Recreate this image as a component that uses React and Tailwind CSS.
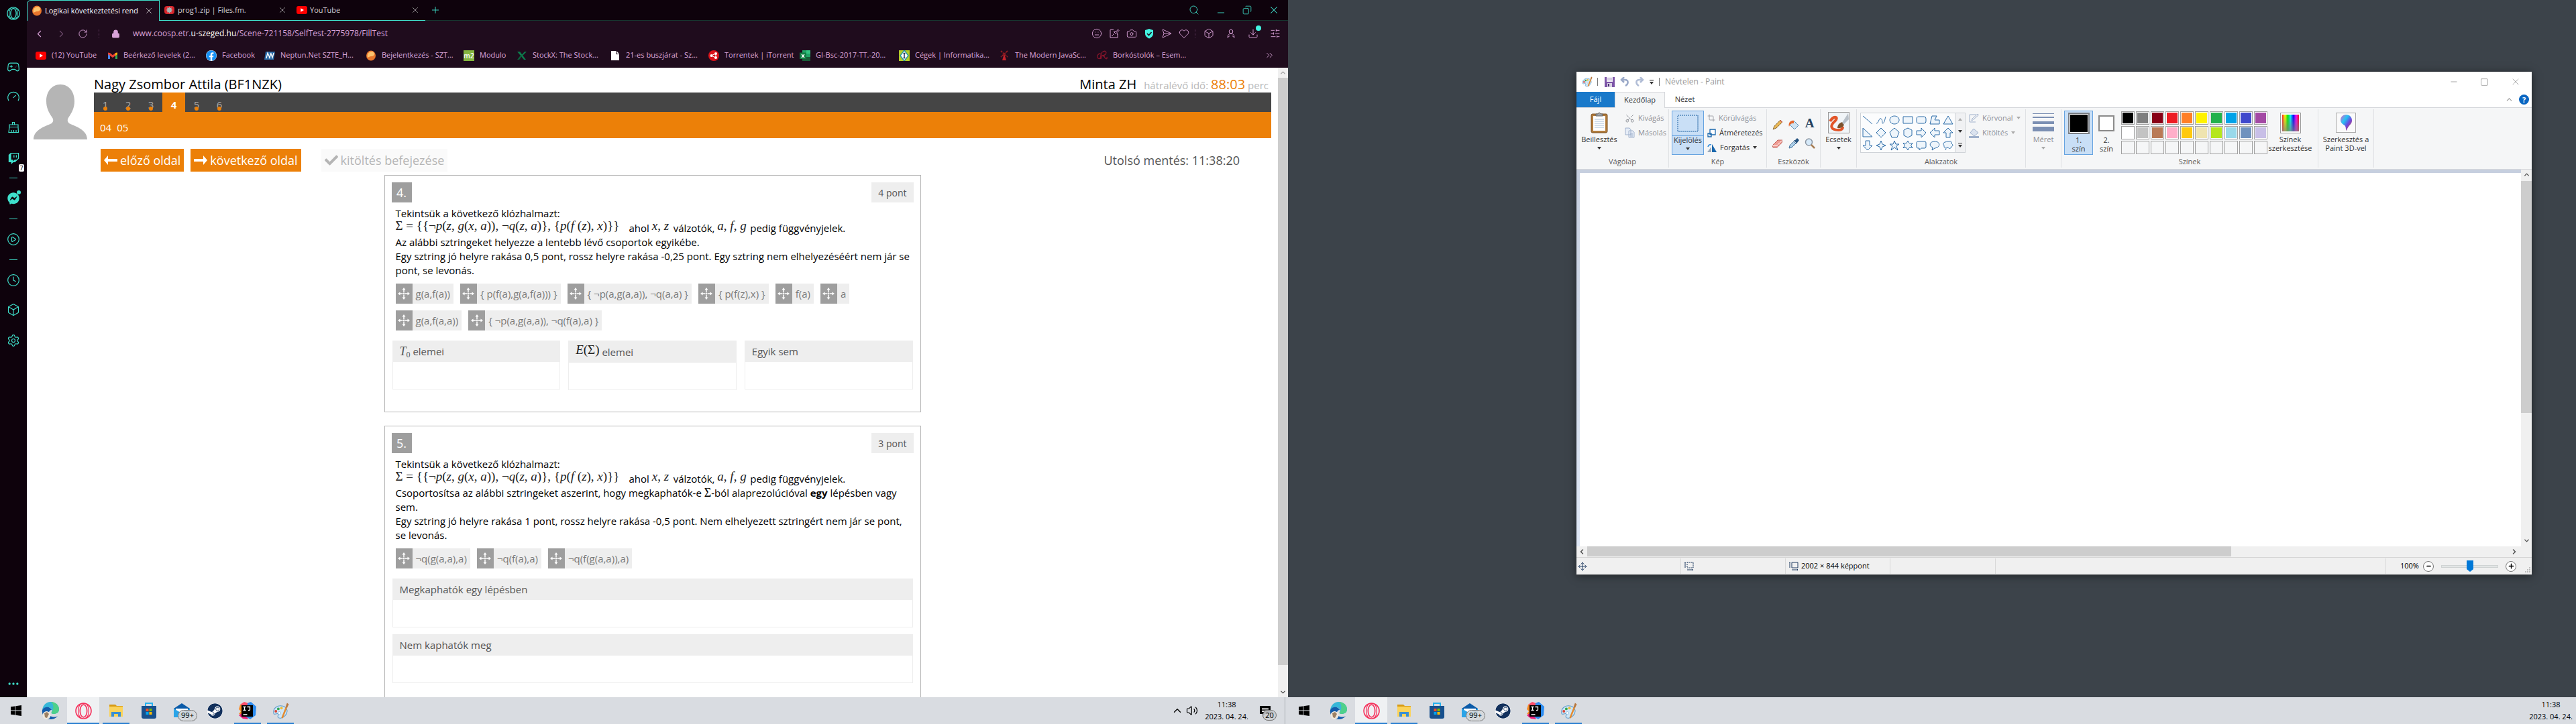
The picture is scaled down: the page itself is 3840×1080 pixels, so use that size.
import React from "react";
import { Search, Copy, X, Plus, ChevronLeft, ChevronRight, ChevronUp, ChevronDown, RotateCw, Lock, Meh, Camera, SendHorizontal, Heart, Box, Download, SlidersHorizontal, Gamepad2, Gauge, CirclePlay, Clock, Settings, Ellipsis, ChevronsRight, Minus, Square, Crop, Scissors, Volume2 } from "lucide-react";
import { FaFacebook, FaTwitch, FaFacebookMessenger, FaSteam, FaCheck } from "react-icons/fa";

const cx = (...a) => a.filter(Boolean).join(" ");

/* ---------- small drawings ---------- */

const YouTubeMark = () => (
  <svg width="16" height="16" viewBox="0 0 16 16"><rect y="2" width="16" height="12" rx="3" fill="#f00" /><path d="M6.3 5.2 11 8l-4.7 2.8z" fill="#fff" /></svg>
);
const SztEgg = () => (
  <svg width="16" height="16" viewBox="0 0 16 16"><ellipse cx="8" cy="8" rx="7" ry="7.500" fill="#e8762c" /><path d="M3 11C1 4 8 0 12 3c3 4-1 6-4 6-2 0-3 1-5 2z" fill="#fdc36e" /></svg>
);
const FilesMark = () => (
  <svg width="17" height="16" viewBox="0 0 17 16"><rect x="1" y="2" width="15" height="12" rx="4" fill="#d8262c" /><path d="m8.500 3 1.200 2 2.300-.8-.8 2.300 2 1.500-2 1.300.8 2.300-2.300-.7-1.200 2-1.300-2-2.300.7.8-2.300-2-1.300 2-1.500-.8-2.300 2.300.8z" fill="#aab2b4" /></svg>
);
const GmailMark = () => (
  <svg width="16" height="16" viewBox="0 0 16 16"><path d="M1 4v9h3V7z" fill="#4285f4" /><path d="M12 7v6h3V4z" fill="#34a853" /><path d="M1 3.500 4 4l4 3.200L12 4l3-.5V6l-7 5-7-5z" fill="#ea4335" /><path d="m12 4 3-.5V6l-3 2z" fill="#fbbc04" /></svg>
);
const NeptunMark = () => (
  <svg width="16" height="16" viewBox="0 0 16 16"><path d="M2 2h14l-2 12H0z" fill="#2d6da8" /><path d="m3 12 2-8 3 7 2-7m-3 8 3-7 2 6 2-7" stroke="#fff" strokeWidth="1.300" fill="none" /></svg>
);
const ModuloMark = () => <span className="flex h-4 w-4 items-center justify-center bg-[#84b53f] text-[10px] leading-4 font-semibold text-white">m2</span>;
const StockXMark = () => (
  <svg width="16" height="16" viewBox="0 0 16 16"><path d="M1 2h4l9 12h-3zM12 2h3L9 8 7.500 7z" fill="#0d7a4c" /><path d="M1 14h3l4-5-1.500-2z" fill="#0a5f3c" /></svg>
);
const PageMark = () => (
  <svg width="16" height="16" viewBox="0 0 16 16"><path d="M2 1h7v5h5v9H2z" fill="#fff" /><path d="M10 1l4 4h-4z" fill="#fff" /></svg>
);
const TorrentMark = () => (
  <svg width="16" height="16" viewBox="0 0 16 16"><circle cx="8" cy="8" r="8" fill="#d9131a" /><path d="M4 8 11 5v6z" stroke="#fff" fill="none" /><circle cx="4.500" cy="8" r="2" fill="#fff" /><circle cx="11" cy="5" r="2" fill="#fff" /><circle cx="11" cy="11" r="2" fill="#fff" /></svg>
);
const ExcelMark = () => (
  <svg width="16" height="16" viewBox="0 0 16 16"><rect x="4" width="12" height="16" fill="#21a366" /><rect x="10" width="6" height="5" fill="#33c481" /><rect x="4" y="10" width="12" height="6" fill="#185c37" /><rect y="3.500" width="10" height="9.500" fill="#107c41" /><path d="m3 6 4 5M7 6l-4 5" stroke="#fff" strokeWidth="1.400" /></svg>
);
const CegekMark = () => (
  <svg width="16" height="16" viewBox="0 0 16 16"><rect width="16" height="16" fill="#b5cc27" /><path d="m8 0 6 8-6 8-6-8z" fill="#fff" stroke="#2a99a0" strokeWidth="1.500" /><path d="M8 4v8M6.500 4.500h3M6.500 11.500h3" stroke="#235" strokeWidth="1.500" /></svg>
);
const WindmillMark = () => (
  <svg width="16" height="16" viewBox="0 0 16 16"><path d="m3 1 10 9M13 1 3 10" stroke="#8e1c22" strokeWidth="1.800" strokeDasharray="3 1" /><path d="m8 5 3 10H5z" fill="#c5222b" /></svg>
);
const BorkMark = () => (
  <svg width="16" height="16" viewBox="0 0 16 16"><path d="M6 13C9 4 3 3 1 8c-1 5 4 6 5 2m2-7c5-4 7 0 5 3-2 2-5 2-5 2s3 0 4 3c1 2 4 3 3-1M7 3 5 13" stroke="#86152b" strokeWidth="1.300" fill="none" /></svg>
);
const OperaRing = ({ size = 20, color = "#3fe0cc" }) => (
  <svg width={size} height={size} viewBox="0 0 24 24" fill="none" stroke={color} strokeWidth="1.600"><ellipse cx="12" cy="12" rx="11" ry="11" /><ellipse cx="12" cy="12" rx="5" ry="9" /><path d="M9 1.500C3 5 3 19 9 22.500M15 1.500c6 3.500 6 17.500 0 21" strokeWidth="1.200" /></svg>
);
const Broom = () => (
  <svg width="18" height="18" viewBox="0 0 18 18" fill="none" stroke="currentColor" strokeWidth="1.200"><path d="M7.500 5V1.500h3V5M3 5h13v3.500H3zM3 8.500l-1 8h14.500l-.5-8M6 16v-3M9.500 16v-3M13 16v-3" /></svg>
);

/* Paint palette used in the title bar and the taskbar */
const PaintMark = ({ size = 24 }) => (
  <svg width={size} height={size} viewBox="0 0 24 24">
    <path d="M2 16C0 8 8 3 15 5c7 2 8 9 3 14-4 4-9 4-10 2s2-4 0-5-5 2-6 0z" fill="#cfe6f6" stroke="#5e9ccb" />
    <circle cx="5" cy="12.500" r="1.900" fill="#d94538" /><circle cx="8.500" cy="9" r="1.900" fill="#35a853" /><circle cx="13" cy="8" r="1.900" fill="#eebd3a" /><circle cx="10" cy="15" r="2" fill="#fff" stroke="#6aa5ce" strokeWidth=".6" />
    <path d="m14 22 6-15" stroke="#e58a2f" strokeWidth="2.400" /><path d="m19 6 2-5.500 2.500 2L21 8z" fill="#b8763c" />
  </svg>
);

/* ---------- browser ---------- */

const tabs = [
  { icon: <SztEgg />, title: "Logikai következtetési rend", active: true },
  { icon: <FilesMark />, title: "prog1.zip | Files.fm." },
  { icon: <YouTubeMark />, title: "YouTube" },
];

const bookmarks = [
  { icon: <YouTubeMark />, text: "(12) YouTube", w: "w-[107px]" },
  { icon: <GmailMark />, text: "Beérkező levelek (2...", w: "w-[147px]" },
  { icon: <FaFacebook size={16} color="#1691f5" className="rounded-full bg-white" />, text: "Facebook", w: "w-[87px]" },
  { icon: <NeptunMark />, text: "Neptun.Net SZTE_H...", w: "w-[151px]" },
  { icon: <SztEgg />, text: "Bejelentkezés - SZT...", w: "w-[146px]" },
  { icon: <ModuloMark />, text: "Modulo", w: "w-[79px]" },
  { icon: <StockXMark />, text: "StockX: The Stock...", w: "w-[139px]" },
  { icon: <PageMark />, text: "21-es buszjárat - Sz...", w: "w-[147px]" },
  { icon: <TorrentMark />, text: "Torrentek | iTorrent", w: "w-[136px]" },
  { icon: <ExcelMark />, text: "GI-Bsc-2017-TT.-20...", w: "w-[148px]" },
  { icon: <CegekMark />, text: "Cégek | Informatika...", w: "w-[149px]" },
  { icon: <WindmillMark />, text: "The Modern JavaSc...", w: "w-[146px]" },
  { icon: <BorkMark />, text: "Borkóstolók – Esem...", w: "w-[146px]" },
];

function IconButton({ label, className, children }) {
  return <button aria-label={label} className={cx("relative flex shrink-0 items-center justify-center", className)}>{children}</button>;
}

function BrowserSidebar() {
  const s = { size: 20, strokeWidth: 1.4 };
  return (
    <nav aria-label="Oldalsáv" className="flex w-10 shrink-0 flex-col items-center bg-[#0e020c] text-[#3fe0cc]">
      <IconButton label="Opera" className="h-10 w-10"><OperaRing /></IconButton>
      <IconButton label="GX Corner" className="mt-[40px] h-10 w-10"><Gamepad2 {...s} /></IconButton>
      <IconButton label="GX Control" className="mt-1 h-10 w-10"><Gauge {...s} /></IconButton>
      <IconButton label="GX Cleaner" className="mt-1 h-11 w-10"><Broom /></IconButton>
      <IconButton label="Twitch" className="mt-1 h-10 w-10">
        <FaTwitch size={17} />
        <span className="absolute right-1 bottom-0 h-[11px] w-2 rounded-xs bg-white text-center text-[9px] leading-[11px] text-black">7</span>
      </IconButton>
      <span className="mt-[9px] h-px w-3 bg-[#3fe0cc]" />
      <IconButton label="Messenger" className="mt-[10px] h-10 w-10">
        <FaFacebookMessenger size={18} />
        <span className="absolute top-2 right-[9px] h-1.5 w-1.5 rounded-full bg-[#3fe0cc]" />
      </IconButton>
      <span className="mt-[10px] h-px w-3 bg-[#3fe0cc]" />
      <IconButton label="Lejátszó" className="mt-[10px] h-10 w-10"><CirclePlay {...s} /></IconButton>
      <span className="mt-[10px] h-px w-3 bg-[#3fe0cc]" />
      <IconButton label="Előzmények" className="mt-[10px] h-10 w-10"><Clock {...s} /></IconButton>
      <IconButton label="Bővítmények" className="mt-1 h-10 w-10"><Box {...s} /></IconButton>
      <IconButton label="Beállítások" className="mt-1 h-11 w-10"><Settings {...s} /></IconButton>
      <IconButton label="Több" className="mt-auto h-10 w-10"><Ellipsis size={20} strokeWidth={2} /></IconButton>
    </nav>
  );
}

function TabStrip() {
  return (
    <div className="flex h-[31px] shrink-0 bg-[#0e020c] text-[11px]">
      {tabs.map((t) => (
        <div key={t.title} className={cx("flex w-[198px] shrink-0 items-center gap-1 pr-2 pl-1.5", t.active ? "rounded-tl-md border border-b-0 border-[#3fe0cc] bg-[#1f0c1d] text-white" : "border-b border-[#3fe0cc] text-[#d6d0d6]")}>
          {t.icon}
          <span className="whitespace-nowrap">{t.title}</span>
          <button aria-label="Lap bezárása" className="ml-auto"><X size={14} strokeWidth={1.2} /></button>
        </div>
      ))}
      <div className="flex flex-1 items-center border-b border-[#16352f] text-[#3fe0cc]">
        <button aria-label="Új lap" className="ml-[7px]"><Plus size={16} strokeWidth={1.4} /></button>
        <div className="ml-auto flex items-center gap-[24px] pr-3">
          <button aria-label="Keresés"><Search size={16} strokeWidth={1.4} /></button>
          <button aria-label="Kis méret"><Minus size={16} strokeWidth={1.4} className="mt-2" /></button>
          <button aria-label="Előző méret"><Copy size={14} strokeWidth={1.4} className="-scale-x-100" /></button>
          <button aria-label="Bezárás"><X size={18} strokeWidth={1.4} /></button>
        </div>
      </div>
    </div>
  );
}

function AddressBar() {
  const s = { size: 16, strokeWidth: 1.4 };
  return (
    <div className="flex h-[38px] shrink-0 items-center pl-2.5 text-[#d9a2d8]">
      <button aria-label="Vissza"><ChevronLeft size={17} strokeWidth={1.5} /></button>
      <button aria-label="Előre" className="ml-4 text-[#6d4a6c]"><ChevronRight size={17} strokeWidth={1.5} /></button>
      <button aria-label="Frissítés" className="ml-4"><RotateCw size={15} strokeWidth={1.5} /></button>
      <span className="ml-4 h-3 border-l border-dotted border-[#5a3358]" />
      <Lock size={13} fill="#d9a2d8" className="ml-[18px]" />
      <div role="textbox" aria-label="Webcím" className="ml-[19px] flex-1 text-[12px] whitespace-nowrap">www.coosp.etr.<span className="text-white">u-szeged.hu</span>/Scene-721158/SelfTest-2775978/FillTest</div>
      <div className="flex items-center gap-2.5">
        <button aria-label="Arc"><Meh {...s} /></button>
        <button aria-label="Kitűzés"><svg width="16" height="16" viewBox="0 0 16 16" fill="none" stroke="currentColor"><path d="M7 2.500H2V14h11V9M4 12l4-4M7 5l4 4M8 4.500 11 5l2.500-3 1.500 1.500L12 6.500l.5 3" /></svg></button>
        <button aria-label="Pillanatkép"><Camera {...s} /></button>
        <button aria-label="Pajzs"><svg width="16" height="16" viewBox="0 0 16 16"><path d="M8 1 2 3v5c0 4 3 6 6 7.500C11 14 14 12 14 8V3z" fill="#43f5e2" /><path d="m5 8 2.500 2.500L11.500 6" stroke="#1f0c1d" strokeWidth="1.600" fill="none" /></svg></button>
        <button aria-label="Küldés"><SendHorizontal {...s} /></button>
        <button aria-label="Kedvencek"><Heart {...s} /></button>
      </div>
      <span className="ml-2 h-3 border-l border-dotted border-[#5a3358]" />
      <div className="mr-[11px] ml-3 flex items-center gap-[17px]">
        <button aria-label="Bővítmények"><Box {...s} /></button>
        <button aria-label="Profil"><svg width="16" height="16" viewBox="0 0 16 16" fill="none" stroke="currentColor"><circle cx="8" cy="5" r="2.800" /><path d="M3 14c0-8 10-8 10 0M3 14l3-2.500M13 14l-3-2.500" /></svg></button>
        <button aria-label="Letöltések" className="relative"><Download {...s} /><span className="absolute -top-1 -right-1 h-2 w-2 rounded-full bg-[#43f5e2]" /></button>
        <button aria-label="Egyszerű beállítás"><SlidersHorizontal {...s} /></button>
      </div>
    </div>
  );
}

function Bookmarks() {
  return (
    <div className="flex h-8 shrink-0 items-center pb-[5px] pl-[13px] text-[11px] text-[#dfa9de]">
      {bookmarks.map((b) => (
        <a key={b.text} href="#" className={cx("flex shrink-0 items-center gap-2 whitespace-nowrap", b.w)}>{b.icon}{b.text}</a>
      ))}
      <button aria-label="További könyvjelzők" className="mr-5 ml-auto"><ChevronsRight size={15} strokeWidth={1.4} /></button>
    </div>
  );
}

/* ---------- test page ---------- */

const M = ({ w, children }) => <span className={cx("inline-block align-[3px] font-[Liberation_Serif,serif] text-[19px] leading-[16px] whitespace-nowrap text-[#222]", w)}>{children}</span>;

function Clauses() {
  return (
    <>
      Tekintsük a következő klózhalmazt:<br />
      <M w="w-[348px]">Σ = {"{{"}¬<i>p</i>(<i>z</i>, <i>g</i>(<i>x</i>, <i>a</i>)), ¬<i>q</i>(<i>z</i>, <i>a</i>){"}"}, {"{"}<i>p</i>(<i>f</i> (<i>z</i>), <i>x</i>){"}}"}</M>ahol <M w="w-[28px]"><i>x</i>, <i>z</i></M> válzotók, <M w="w-[45px]"><i>a</i>, <i>f</i>, <i>g</i></M> pedig függvényjelek.<br />
    </>
  );
}

function Chip({ children }) {
  return (
    <button draggable className="flex h-[30px] items-stretch bg-[#eee] text-[15px] text-[#7a7a7a]">
      <span className="flex w-[25px] items-center justify-center bg-[#9e9e9e]">
        <svg width="18" height="18" viewBox="0 0 18 18" fill="#fff"><path d="M9 0l2.500 3.500H6.500zM9 18l2.500-3.500H6.500zM0 9l3.500-2.500v5zM18 9l-3.500-2.500v5z" /><path d="M9 3v4.500M9 10.500V15M3 9h4.500M10.500 9H15" stroke="#fff" strokeWidth="1.500" /><path d="M8 8h2v2H8z" /></svg>
      </span>
      <span className="px-[5px] leading-[31px] whitespace-nowrap">{children}</span>
    </button>
  );
}

function DropBox({ title, className }) {
  return (
    <section className={className}>
      <h3 className="bg-[#eee] px-[11px] pt-[6px] pb-[5px] text-[15px] leading-[21px] text-[#555]">{title}</h3>
      <div className="h-[41px] border border-t-0 border-[#eee]" />
    </section>
  );
}

function Question({ number, points, children }) {
  return (
    <article className="border border-[#b5b5b5] px-[10px] pt-[10px]">
      <header className="flex justify-between">
        <h2 className="flex h-[30px] w-[30px] items-center justify-center bg-[#9e9e9e] text-[18px] text-white">{number}.</h2>
        <span className="flex h-[30px] items-center bg-[#eee] px-[10px] text-[14px] text-[#555]">{points} pont</span>
      </header>
      {children}
    </article>
  );
}

const pages = [1, 2, 3, 4, 5, 6];

function TestPage() {
  return (
    <div className="flex min-h-0 flex-1 overflow-hidden bg-white">
      <main className="flex-1 px-[10px] pt-[13px] font-[Open_Sans,sans-serif]">
        <div className="flex">
          <svg width="80" height="94" viewBox="0 0 80 94" className="mt-[1px] mr-[10px] shrink-0"><path d="M40 11c13 0 21 11 21 25 0 10-4 17-8 23-3 4-3 7 0 10 5 3 27 8 27 24H0c0-16 22-21 27-24 3-3 3-6 0-10-4-6-8-13-8-23 0-14 8-25 21-25z" fill="#b5b5b5" /></svg>
          <div className="flex-1">
            <div className="flex h-6 items-center justify-between text-[20px] text-black">
              <h1>Nagy Zsombor Attila (BF1NZK)</h1>
              <p className="mr-1 flex items-baseline gap-1"><span className="mr-[7px]">Minta ZH</span><span className="text-[15px] text-[#b8b8b8]">hátralévő idő:</span><span className="text-[#ec8008]">88:03</span><span className="text-[15px] text-[#b8b8b8]">perc</span></p>
            </div>
            <nav aria-label="Oldalak" className="flex h-[29px] bg-[#454545]">
              {pages.map((p) => (
                <a key={p} href="#" className={cx("relative flex w-[34px] items-center justify-center pt-[7px] text-[15px]", p === 4 ? "bg-[#ec8008] font-bold text-white" : "text-[#aaa]")}>
                  {p}
                  {p !== 4 && <span className="absolute bottom-0.5 h-1.5 w-1.5 rounded-full bg-[#ec8008]" />}
                </a>
              ))}
            </nav>
            <div className="flex h-[39px] gap-2 bg-[#ec8008] px-[9px] pt-[6px] text-[15px] leading-[34px] text-white"><a href="#">04</a><a href="#">05</a></div>
          </div>
        </div>
        <div className="mt-[13px] flex h-[34px] items-center pl-[100px] text-[18px] whitespace-nowrap">
          <button className="flex h-full items-center gap-1 bg-[#ec8008] px-[5px] text-white">
            <svg width="20" height="14" viewBox="0 0 20 14" fill="#fff"><path d="M0 7 6 0v5h14v4H6v5z" /></svg>előző oldal
          </button>
          <button className="ml-[10px] flex h-full items-center gap-1 bg-[#ec8008] px-[5px] text-white">
            <svg width="20" height="14" viewBox="0 0 20 14" fill="#fff"><path d="M20 7 14 0v5H0v4h14v5z" /></svg>következő oldal
          </button>
          <button disabled className="ml-[30px] flex h-full items-center gap-1 bg-[#fafafa] px-[5px] text-[#b5b5b5]"><FaCheck size={20} />kitöltés befejezése</button>
          <p className="mr-[47px] ml-auto text-[#555]">Utolsó mentés: 11:38:20</p>
        </div>
        <div className="mx-[10px] flex justify-center">
          <div className="mt-[5px] flex w-[800px] flex-col gap-5">
            <Question number={4} points={4}>
              <p className="mt-[6px] pl-[6px] text-[15px] leading-[21px] text-black">
                <Clauses />
                Az alábbi sztringeket helyezze a lentebb lévő csoportok egyikébe.<br />
                Egy sztring jó helyre rakása 0,5 pont, rossz helyre rakása -0,25 pont. Egy sztring nem elhelyezéséért nem jár se pont, se levonás.
              </p>
              <div className="mt-[9px] mr-16 ml-[6px] flex flex-wrap gap-x-[10px] gap-y-[10px]">
                <Chip>g(a,f(a))</Chip><Chip>{"{ p(f(a),g(a,f(a))) }"}</Chip><Chip>{"{ ¬p(a,g(a,a)), ¬q(a,a) }"}</Chip><Chip>{"{ p(f(z),x) }"}</Chip><Chip>f(a)</Chip><Chip>a</Chip><Chip>g(a,f(a,a))</Chip><Chip>{"{ ¬p(a,g(a,a)), ¬q(f(a),a) }"}</Chip>
              </div>
              <div className="mt-[15px] mb-[32px] grid grid-cols-3 items-start gap-3 px-px">
                <DropBox title={<><i className="font-[Liberation_Serif,serif] text-[18px] leading-[20px]">T</i><sub className="font-[Liberation_Serif,serif] text-[12px]">0</sub> elemei</>} />
                <DropBox title={<><M><i>E</i>(Σ)</M> elemei</>} />
                <DropBox title="Egyik sem" />
              </div>
            </Question>
            <Question number={5} points={3}>
              <p className="mt-[6px] pl-[6px] text-[15px] leading-[21px] text-black">
                <Clauses />
                Csoportosítsa az alábbi sztringeket aszerint, hogy megkaphatók-e <span className="font-[Liberation_Serif,serif] text-[18px] leading-[20px]">Σ</span>-ból alaprezolúcióval <b>egy</b> lépésben vagy sem.<br />
                Egy sztring jó helyre rakása 1 pont, rossz helyre rakása -0,5 pont. Nem elhelyezett sztringért nem jár se pont, se levonás.
              </p>
              <div className="mt-[9px] ml-[6px] flex gap-[10px]">
                <Chip>¬q(g(a,a),a)</Chip><Chip>¬q(f(a),a)</Chip><Chip>¬q(f(g(a,a)),a)</Chip>
              </div>
              <DropBox className="mx-px mt-[15px]" title="Megkaphatók egy lépésben" />
              <DropBox className="mx-px mt-[10px] mb-[34px]" title="Nem kaphatók meg" />
            </Question>
          </div>
        </div>
      </main>
      <div className="flex w-[15px] shrink-0 flex-col bg-[#f0f0f0]">
        <ChevronUp size={15} color="#a3a3a3" strokeWidth={3} className="shrink-0 p-0.5" />
        <div className="flex-1 bg-[#cdcdcd]" />
        <div className="h-[33px]" />
        <ChevronDown size={15} color="#505050" strokeWidth={3} className="shrink-0 p-0.5" />
      </div>
    </div>
  );
}

/* ---------- taskbar ---------- */

const EdgeMark = () => (
  <svg width="26" height="26" viewBox="0 0 26 26">
    <path d="M1 12C2 4 8 0 13 0c8 0 13 5 13 11 0 5-4 7-8 7-3 0-4-1-3-3 2-4-2-7-6-7-4 0-7 2-8 4z" fill="#36b7d8" /><path d="M14 0c7 0 12 5 12 11 0 5-4 7-8 7-3 0-4-1-3-3 3-3 4-11-1-15z" fill="#4fd08a" />
    <path d="M1 12c4-7 13-4 14 0-4 0-6 6-2 9 4 2 8 2 11 0-3 4-7 5-11 5C4 26 0 19 1 12z" fill="#125cab" />
    <circle cx="7.500" cy="20" r="6" fill="#efe9df" /><path d="m4 17 4-2 3 3-3 6-3-1z" fill="#9b8064" />
  </svg>
);
const FolderMark = () => (
  <svg width="22" height="22" viewBox="0 0 22 22"><path d="M1 2h9l2 2h9v4H1z" fill="#d79a14" /><path d="M1 5h20v15H1z" fill="#fbd35b" /><path d="M4 13h14v7h-4v-4H8v4H4z" fill="#3b8fd4" /></svg>
);
const StoreMark = () => (
  <svg width="24" height="24" viewBox="0 0 24 24"><path d="M7 6V1h10v5" stroke="#24b2ef" strokeWidth="2" fill="none" /><path d="M1 5h22v16q0 3-3 3H4q-3 0-3-3z" fill="#17508d" /><path d="M7.500 9h4v4h-4z" fill="#f25022" /><path d="M12.500 9h4v4h-4z" fill="#7fba00" /><path d="M7.500 14h4v4h-4z" fill="#00a4ef" /><path d="M12.500 14h4v4h-4z" fill="#ffb900" /></svg>
);
const MailMark = () => (
  <svg width="24" height="24" viewBox="0 0 24 24"><path d="M0 9 12 1l12 8v13H0z" fill="#0b5ba8" /><path d="M3 9h18v6H3z" fill="#fff" /><path d="m0 9 12 7 12-7v13H0z" fill="#2aa4e8" /></svg>
);
const IdeaMark = () => (
  <svg width="26" height="26" viewBox="0 0 26 26"><path d="M2 4 8 0l6 2 2-2-2 10z" fill="#ff4d6a" /><path d="m2 4 6 2v14l-8-2 3-4-3-3z" fill="#fb8b24" /><path d="m0 20 8-6 6 12-8-1z" fill="#ec1e79" /><path d="m13 2 5-2 8 7-1 13-8 6-7-4z" fill="#2c8cf0" /><rect x="4" y="5" width="17" height="17" fill="#000" /><path d="M6.500 7.500h4m-2 0v5m-2 0h4M12.500 7.500h4v4q0 1.300-2.500 1M6.500 19h6" stroke="#fff" strokeWidth="1.300" fill="none" /></svg>
);

const apps = [
  { name: "Microsoft Edge", icon: <EdgeMark />, w: "w-[50px]" },
  { name: "Opera GX", icon: <OperaRing size={25} color="#f5325c" />, w: "w-[48px]", open: "w-12", active: true },
  { name: "Fájlkezelő", icon: <FolderMark />, w: "w-[50px]", open: "w-10" },
  { name: "Microsoft Store", icon: <StoreMark />, w: "w-[48px]" },
  { name: "Posta", icon: <MailMark />, w: "w-[50px]", badge: "99+" },
  { name: "Steam", icon: <FaSteam size={23} color="#12305c" className="rounded-full bg-white" />, w: "w-[48px]" },
  { name: "IntelliJ IDEA", icon: <IdeaMark />, w: "w-[50px]", open: "w-10" },
  { name: "Paint", icon: <PaintMark size={25} />, w: "w-[48px]", open: "w-10" },
];

function Taskbar({ tray }) {
  return (
    <footer className="flex h-10 shrink-0 bg-[#d9dce1] font-[Open_Sans,sans-serif] text-black">
      <button aria-label="Start" className="flex w-[50px] items-center justify-center pr-0.5">
        <svg width="16" height="16" viewBox="0 0 16 16"><path d="M0 2.300 6.500 1.400v6.100H0zM7.300 1.200 16 0v7.500H7.300zM0 8.400h6.500v6.200L0 13.700zM7.300 8.400H16V16l-8.700-1.200z" /></svg>
      </button>
      {apps.map((a) => (
        <button key={a.name} aria-label={a.name} className={cx("relative flex items-center justify-center", a.w, a.active && "bg-[#eff1f3]")}>
          {a.icon}
          {a.badge && <span className="absolute top-[19px] left-[19px] flex h-[17px] w-[29px] items-center justify-center rounded-full border border-[#777] bg-[#d5d8dc]/90 text-[11px] font-medium">{a.badge}</span>}
          {a.open && <span className={cx("absolute bottom-0 h-0.5 bg-[#2a7fd0]", a.open)} />}
        </button>
      ))}
      <div className={cx("ml-auto flex items-center", tray ? "" : "pr-[5px]")}>
        {tray && <button aria-label="Rejtett ikonok" className="mr-1"><ChevronUp size={18} strokeWidth={1.8} /></button>}
        {tray && <button aria-label="Hangerő" className="mr-[10px]"><Volume2 size={18} strokeWidth={1.6} /></button>}
        <time className="w-[65px] text-center text-[11px] leading-[18px] whitespace-nowrap"><span className="block">11:38</span>2023. 04. 24.</time>
        {tray && (
          <button aria-label="Értesítések" className="relative mr-[15px] ml-[17px] flex h-10 w-[22px] items-center">
            <svg width="17" height="17" viewBox="0 0 17 17"><path d="M0 1h16v12H8l-4 4v-4H0z" /><path d="M3 4.500h10M3 7h10M3 9.500h5" stroke="#fff" /></svg>
            <span className="absolute top-[19px] left-1 flex h-4 w-[21px] items-center justify-center rounded-full border border-[#777] bg-[#c9ccd0]/90 text-[11px] font-medium">20</span>
          </button>
        )}
        {tray && <span className="mr-1 h-10 w-px bg-[#a9adb2]" />}
      </div>
    </footer>
  );
}

/* ---------- Paint ---------- */

const Arrow = ({ dim }) => <svg width="6" height="4" viewBox="0 0 6 4" className="shrink-0"><path d="M0 0h6L3 4z" fill={dim ? "#aaa" : "#333"} /></svg>;

function Group({ label, className, children }) {
  return (
    <div role="group" aria-label={label || "Csoport"} className={cx("my-[2px] flex shrink-0 flex-col border-r border-[#dfe1e4]", className)}>
      <div className="flex h-[72px]">{children}</div>
      <span className="pb-[1px] text-center leading-4 text-[#5f5f5f]">{label}</span>
    </div>
  );
}

const SmallTool = ({ icon, children, dim, arrow }) => (
  <button disabled={dim} className={cx("flex h-[22px] items-center gap-[5px] whitespace-nowrap", dim ? "text-[#8d9097]" : "text-[#333]")}>{icon}{children}{arrow && <Arrow dim={dim} />}</button>
);

const BigTool = ({ icon, lines, arrow, dim, className }) => (
  <button disabled={dim} className={cx("flex h-[66px] shrink-0 flex-col items-center whitespace-nowrap", dim ? "text-[#8d9097]" : "text-[#333]", className)}>
    <span className="flex h-9 items-center justify-center">{icon}</span>
    {lines.map((l) => <span key={l} className="leading-[13px]">{l}</span>)}
    {arrow && <span className="mt-[5px]"><Arrow dim={dim} /></span>}
  </button>
);

const shapes = [
  ["Vonal", "M1 2 15 14"], ["Görbe", "M1 13C4 14 5 4 8 6s1 8 3 7 3-7 4-10"], ["Ellipszis", "M8 2a7 6 0 1 0 .1 0z"], ["Téglalap", "M1 3h14v10H1z"], ["Lekerekített téglalap", "M4 3h8q3 0 3 3v4q0 3-3 3H4q-3 0-3-3V6q0-3 3-3z"], ["Sokszög", "M1 14 4 2h7L8 8h7v6z"], ["Háromszög", "M8 2 15 14H1z"],
  ["Derékszögű háromszög", "M1 1v13h14z"], ["Rombusz", "M8 1l7 7-7 7-7-7z"], ["Ötszög", "M8 1l7 6-3 8H4L1 7z"], ["Hatszög", "M8 1l6 3v8l-6 3-6-3V4z"], ["Jobbra nyíl", "M1 5h7V1l7 7-7 7v-4H1z"], ["Balra nyíl", "M15 5H8V1L1 8l7 7v-4h7z"], ["Felfelé nyíl", "M5 15V8H1l7-7 7 7h-4v7z"],
  ["Lefelé nyíl", "M5 1v7H1l7 7 7-7h-4V1z"], ["Négyágú csillag", "M8 1l2 5 5 2-5 2-2 5-2-5-5-2 5-2z"], ["Ötágú csillag", "M8 1l2 5h5l-4 3 2 6-5-4-5 4 2-6-4-3h5z"], ["Hatágú csillag", "M8 1l2 3.500h5L12.500 8l2.500 3.500h-5L8 15l-2-3.500H1L3.500 8 1 4.500h5z"], ["Lekerekített képfelirat", "M3 2h10q2 0 2 2v6q0 2-2 2H8l-3 3v-3H3q-2 0-2-2V4q0-2 2-2z"], ["Ovális képfelirat", "M8 2c9 0 9 9 0 10l-4 3 1-4C-1 9 0 2 8 2z"], ["Felhő képfelirat", "M4 3c2-2 4-1 5-1 3-1 5 1 4 3 3 2 2 4 0 5-1 3-4 3-5 1l-3 1c-3 0-3-2-3-4-2-2-1-5 2-5zM5 13l-1 2"],
];

const colors = ["#000000", "#7f7f7f", "#880015", "#ed1c24", "#ff7f27", "#fff200", "#22b14c", "#00a2e8", "#3f48cc", "#a349a4", "#ffffff", "#c3c3c3", "#b97a57", "#ffaec9", "#ffc90e", "#efe4b0", "#b5e61d", "#99d9ea", "#7092be", "#c8bfe7", ...Array(10).fill("")];

const toolIcons = [
  ["Ceruza", <svg width="16" height="16" viewBox="0 0 16 16"><path d="m1 15 2-5L12 1l3 3-9 9z" fill="#e8b85a" stroke="#8b6b37" /><path d="m11 2 1-1 3 3-1 1z" fill="#dc6e63" /></svg>],
  ["Kitöltés színnel", <svg width="17" height="16" viewBox="0 0 17 16"><path d="m3 8 6-6 7 7-6 6z" fill="#cfe3f1" stroke="#5c8fb5" /><path d="M9 2C5 1 0 5 2 11c1-3 2-5 7-5z" fill="#e5662c" /></svg>],
  ["Szöveg", <b className="font-[Liberation_Serif,serif] text-[19px] leading-4 text-[#23415f]">A</b>],
  ["Radír", <svg width="17" height="16" viewBox="0 0 17 16"><path d="m1 11 8-8h7l-1 4-7 7H2z" fill="#ef9b93" stroke="#c0675f" /><path d="m1 11 7 0 8-8" stroke="#fff" fill="none" /></svg>],
  ["Színválasztó", <svg width="16" height="16" viewBox="0 0 16 16"><path d="m1 15 1-4 6-6 3 3-6 6z" fill="#aecfe8" stroke="#41719c" /><path d="m8 3 2 0 3-3 3 3-3 4v2z" fill="#24527e" /></svg>],
  ["Nagyító", <svg width="16" height="16" viewBox="0 0 16 16"><circle cx="6.500" cy="6" r="5" fill="#d6eafa" stroke="#8b96a3" strokeWidth="1.500" /><path d="m10 10 5 5" stroke="#a87f55" strokeWidth="2.500" /></svg>],
];

function Ribbon() {
  return (
    <div className="flex h-[92px] shrink-0 border-b border-[#d5d7db] bg-[#f5f6f7]">
      <Group label="Vágólap" className="w-[138px]">
        <BigTool className="w-[68px] pt-0.5" arrow lines={["Beillesztés"]} icon={<svg width="26" height="32" viewBox="0 0 26 32"><rect x="1" y="3" width="24" height="28" rx="2" fill="#b27c3c" stroke="#7d5324" /><rect x="4" y="6" width="18" height="22" fill="#fff" /><path d="M6 11h14M6 14h14M6 17h14M6 20h14M6 23h14" stroke="#a9c2da" /><path d="M8 6V3h3q2-4 4 0h3v3z" fill="#a0a4a8" stroke="#666" /></svg>} />
        <div className="ml-1 pt-0.5">
          <SmallTool dim icon={<Scissors size={15} strokeWidth={1.5} className="-rotate-90" />}>Kivágás</SmallTool>
          <SmallTool dim icon={<svg width="15" height="16" viewBox="0 0 15 16" fill="#e6edf7" stroke="#9fb0cb"><path d="M1 1h6l2 2v8H1zM6 5h6l2 2v8H6z" /><path d="M8 9h4M8 11h4M8 13h4" /></svg>}>Másolás</SmallTool>
        </div>
      </Group>
      <Group label="Kép" className="w-[146px]">
        <BigTool className="mt-0.5 ml-1 w-[48px] border border-[#66a3e0] bg-[linear-gradient(#c9dff6_36px,#66a3e0_36px,#66a3e0_37px,#c9dff6_37px)]" arrow lines={["Kijelölés"]} icon={<svg width="32" height="26" viewBox="0 0 32 26"><path d="M1 1h30v24H1z" fill="none" stroke="#1a5fa0" strokeDasharray="2 1" /></svg>} />
        <div className="ml-[5px] pt-0.5">
          <SmallTool dim icon={<Crop size={12} strokeWidth={1.6} />}>Körülvágás</SmallTool>
          <SmallTool icon={<svg width="13" height="13" viewBox="0 0 13 13" fill="#fff" stroke="#1a67ac" strokeWidth="1.300"><path d="M4 1h8v8H4zM1 7h5v5H1z" /></svg>}>Átméretezés</SmallTool>
          <SmallTool arrow icon={<svg width="14" height="13" viewBox="0 0 14 13"><path d="M7 13V1l7 12z" fill="#1a67ac" /><path d="M0 13h6V5z" fill="#9ab" /><path d="M1 5q1-4 5-3" stroke="#2b88d8" strokeWidth="1.500" fill="none" /></svg>}>Forgatás</SmallTool>
        </div>
      </Group>
      <Group label="Eszközök" className="w-[80px]">
        <div className="mx-auto mt-2 grid h-[56px] w-[72px] grid-cols-3 place-items-center">
          {toolIcons.map(([n, i]) => <button key={n} aria-label={n}>{i}</button>)}
        </div>
      </Group>
      <Group className="w-[54px]">
        <BigTool className="w-full pt-0.5" arrow lines={["Ecsetek"]} icon={<svg width="32" height="32" viewBox="0 0 32 32"><rect x=".5" y=".5" width="31" height="31" fill="#f1f5f8" stroke="#999" /><path d="M3 14C9 4 17 8 10 14s-7 13 6 13c5 0 6-3 6-5" stroke="#e2562a" strokeWidth="4" fill="none" /><path d="M14 24c0-6 5-9 9-9 3 5-2 10-9 9z" fill="#7c522c" /><path d="m21 16 9-14 1 9-8 8z" fill="#b9c1c9" /></svg>} />
      </Group>
      <Group label="Alakzatok" className="w-[252px]">
        <div className="mt-[5px] ml-[5px] flex h-[60px] border border-[#cfd3d8] bg-[#fbfcfd]">
          <div className="grid grid-cols-7 place-items-center">
            {shapes.map(([n, d]) => (
              <button key={n} aria-label={n} className="flex h-[19px] w-5 items-center justify-center"><svg width="16" height="16" viewBox="0 0 16 16" fill="#eef5fb" stroke="#2c6ca8"><path d={d} fill={n === "Görbe" ? "none" : undefined} /></svg></button>
            ))}
          </div>
          <div className="flex w-[15px] flex-col items-center justify-around border-l border-[#cfd3d8] bg-[#f0f1f3]">
            <button aria-label="Fel" className="rotate-180"><Arrow dim /></button>
            <button aria-label="Le"><Arrow /></button>
            <button aria-label="Több alakzat" className="border-t border-[#333] pt-0.5"><Arrow /></button>
          </div>
        </div>
        <div className="ml-[5px] pt-0.5">
          <SmallTool dim arrow icon={<svg width="15" height="14" viewBox="0 0 15 14" fill="none" stroke="#9fb0cb"><path d="M11 2H1v11h9M4 11l1-3 8-7 1.500 1.500-8 7z" /></svg>}>Körvonal</SmallTool>
          <SmallTool dim arrow icon={<svg width="15" height="15" viewBox="0 0 15 15"><path d="m2 7 5-6 7 6-6 5z" fill="#dbe3ef" stroke="#9fb0cb" /><path d="M0 12h15v3H0z" fill="#9fb0cb" /></svg>}>Kitöltés</SmallTool>
        </div>
      </Group>
      <Group className="w-[53px]">
        <BigTool dim className="w-full pt-0.5" arrow lines={["Méret"]} icon={<svg width="32" height="28" viewBox="0 0 32 28" fill="#7b8fb3"><path d="M0 0h32v1H0zM0 5h32v2H0zM0 12h32v4H0zM0 20h32v7H0z" /></svg>} />
      </Group>
      <Group label="Színek" className="w-[383px]">
        <BigTool className="mt-0.5 ml-1 w-[43px] border border-[#66a3e0] bg-[#c9dff6]" lines={["1.", "szín"]} icon={<span className="h-8 w-8 border-2 border-[#7b7f85] bg-black outline-1 -outline-offset-3 outline-white" />} />
        <BigTool className="mt-0.5 w-[40px] pt-px" lines={["2.", "szín"]} icon={<span className="h-6 w-6 border-2 border-[#8a8a8a] bg-white" />} />
        <div className="mt-[3px] ml-[2px] grid shrink-0 grid-cols-10 content-start gap-[2px]">
          {colors.map((c, i) => <button key={i} aria-label={"Szín " + (i + 1)} className={cx("h-5 w-5 border border-[#a0a0a0] p-px", c && "bg-white")}><span className="block h-full w-full" style={{ background: c }} /></button>)}
        </div>
        <BigTool className="ml-0.5 w-[64px] pt-0.5" lines={["Színek", "szerkesztése"]} icon={<span className="h-[29px] w-[29px] border-2 border-white bg-[linear-gradient(to_bottom,transparent,#808080c0),linear-gradient(to_right,#f22,#ff0,#0e0,#0ef,#00f,#f0f,#f02)] outline-1 outline-[#999]" />} />
      </Group>
      <Group className="w-[83px]">
        <BigTool className="w-full pt-0.5" lines={["Szerkesztés a", "Paint 3D-vel"]} icon={<svg width="30" height="30" viewBox="0 0 30 30"><defs><linearGradient id="drop" x1="0" y1="0" x2="1" y2="1"><stop offset="0" stopColor="#ee5fd0" /><stop offset=".35" stopColor="#22c6f3" /><stop offset=".6" stopColor="#6a4be0" /><stop offset="1" stopColor="#e3372c" /></linearGradient></defs><rect x=".5" y=".5" width="29" height="29" fill="#fafafa" stroke="#aaa" /><path d="M15 3c6 0 9 4 9 9 0 6-6 7-8 15-2-2 0-5-3-8-3-2-6-4-6-8 0-5 4-8 8-8z" fill="url(#drop)" /></svg>} />
      </Group>
    </div>
  );
}

function PaintWindow() {
  return (
    <section aria-label="Paint" className="absolute top-[107px] right-[66px] bottom-[223px] left-[430px] flex flex-col bg-[#f0f0f0] font-[Open_Sans,sans-serif] text-[11px] text-[#333] shadow-[0_2px_12px_rgba(0,0,0,0.5)]">
      <header className="flex h-[30px] shrink-0 items-center bg-white pl-2 text-[12px] text-[#999]">
        <PaintMark size={16} />
        <span className="mx-[7px] h-3 w-px bg-[#777]" />
        <button aria-label="Mentés" className="ml-[3px]"><svg width="15" height="15" viewBox="0 0 15 15"><path d="M0 0h15v15H0z" fill="#7d55a8" /><path d="M3 0h9v7H3z" fill="#f2f0f7" /><path d="M4 2h7M4 4h7" stroke="#b9a7cf" /><path d="M4 9h7v6H4z" fill="#d9d3e3" /><path d="M5 10h2v4H5z" fill="#4d3175" /></svg></button>
        <button aria-label="Visszavonás" className="ml-2"><svg width="14" height="14" viewBox="0 0 14 14" fill="none" stroke="#9aa9c8" strokeWidth="2.500"><path d="M2 4h5c6 0 6 6 1 9M6 0 2 4l4 4" /></svg></button>
        <button aria-label="Mégis" className="ml-2 -scale-x-100"><svg width="14" height="14" viewBox="0 0 14 14" fill="none" stroke="#b1bdd6" strokeWidth="2.500"><path d="M2 4h5c6 0 6 6 1 9M6 0 2 4l4 4" /></svg></button>
        <button aria-label="Gyorselérési eszköztár" className="ml-2 border-t border-black pt-0.5"><Arrow /></button>
        <span className="mx-[8px] h-3 w-px bg-[#777]" />
        Névtelen - Paint
        <div className="mr-4 ml-auto flex items-center gap-8">
          <button aria-label="Kis méret"><Minus size={14} strokeWidth={1.5} /></button>
          <button aria-label="Teljes méret"><Square size={13} strokeWidth={1.5} /></button>
          <button aria-label="Bezárás"><X size={16} strokeWidth={1.2} /></button>
        </div>
      </header>
      <div role="tablist" className="flex h-6 shrink-0 border-b border-[#d5d7db] bg-white">
        <button role="tab" className="w-[57px] bg-[#1979ca] text-white">Fájl</button>
        <button role="tab" aria-selected="true" className="-mb-px w-[75px] border border-b-0 border-[#d5d7db] bg-[#f5f6f7]">Kezdőlap</button>
        <button role="tab" className="w-[59px]">Nézet</button>
        <div className="mr-1 ml-auto flex items-center gap-2">
          <button aria-label="Menüszalag összecsukása"><ChevronUp size={13} color="#999" /></button>
          <button aria-label="Súgó" className="h-[15px] w-[15px] rounded-full bg-[#0a66c2] text-[11px] leading-[15px] font-bold text-white">?</button>
        </div>
      </div>
      <Ribbon />
      <div className="flex min-h-0 flex-1">
        <div className="flex-1 bg-linear-to-b from-[#c6cfdf] to-[#dfe8f6] pt-[5px] pl-[5px]"><div className="h-full bg-white" /></div>
        <div className="flex w-4 flex-col items-center bg-[#f0f0f0]">
          <ChevronUp size={15} color="#505050" strokeWidth={3} className="shrink-0 p-0.5" />
          <div className="mt-[2px] h-[346px] w-full bg-[#cdcdcd]" />
          <ChevronDown size={15} color="#505050" strokeWidth={3} className="mt-auto mb-px shrink-0 p-0.5" />
        </div>
      </div>
      <div className="flex h-[15px] shrink-0 items-center pr-[18px]">
        <ChevronLeft size={16} color="#505050" strokeWidth={3} className="p-0.5" />
        <div className="h-full w-[960px] bg-[#cdcdcd]" />
        <ChevronRight size={16} color="#505050" strokeWidth={3} className="ml-auto p-0.5" />
      </div>
      <footer className="mt-px flex h-[26px] shrink-0 items-stretch border-t border-[#d5d5d5] text-black">
        <div className="my-px flex w-[156px] items-center border-r border-[#d9d9d9] pl-[3px]"><svg width="12" height="12" viewBox="0 0 12 12" stroke="#1f3a60"><path d="M6 0v12M0 6h12" /><path d="M4 2.500 6 0l2 2.500M4 9.500 6 12l2-2.500M2.500 4 0 6l2.500 2M9.500 4 12 6 9.500 8" fill="none" /></svg></div>
        <div className="my-px flex w-[156px] items-center border-r border-[#d9d9d9] pl-1"><svg width="15" height="13" viewBox="0 0 15 13" fill="none" stroke="#1f3a60"><path d="M5 1h9v8H5z" strokeDasharray="2 1" /><path d="M2 1v8M1 2l1-1 1 1M5 12h9M13 11l1 1-1 1" /></svg></div>
        <div className="my-px flex w-[156px] items-center gap-1 border-r border-[#d9d9d9] pl-1"><svg width="15" height="13" viewBox="0 0 15 13" fill="none" stroke="#1f3a60"><path d="M5 1h9v8H5z" /><path d="M2 1v8M1 2l1-1 1 1M5 12h9M13 11l1 1-1 1" /></svg>2002 × 844 képpont</div>
        <div className="my-px w-[157px] border-r border-[#d9d9d9]" />
        <div className="my-px ml-auto flex w-[218px] items-center border-l border-[#d9d9d9] pl-[21px]">
          <span className="w-[34px]">100%</span>
          <button aria-label="Kicsinyítés" className="flex h-4 w-4 items-center justify-center rounded-full border border-[#777] bg-white"><Minus size={9} strokeWidth={4} /></button>
          <div className="relative mx-[11px] flex h-5 w-[85px] items-center">
            <span className="h-1 w-full border border-[#cfd3d3] bg-[#e3e6e6]" />
            <svg width="10" height="17" viewBox="0 0 10 17" className="absolute left-[38px]"><path d="M0 0h10v13l-5 4-5-4z" fill="#0078d7" /></svg>
            <input type="range" aria-label="Nagyítás" className="absolute inset-0 w-full opacity-0" />
          </div>
          <button aria-label="Nagyítás" className="flex h-4 w-4 items-center justify-center rounded-full border border-[#777] bg-white"><Plus size={11} strokeWidth={3} /></button>
          <svg width="10" height="10" viewBox="0 0 10 10" className="mr-px mb-px ml-auto self-end" fill="#bbb"><path d="M7 1h2v2H7zM7 4h2v2H7zM7 7h2v2H7zM4 4h2v2H4zM4 7h2v2H4zM1 7h2v2H1z" /></svg>
        </div>
      </footer>
    </section>
  );
}

export default function App() {
  return (
    <div className="grid h-screen grid-cols-2 overflow-hidden bg-[#3c434a]">
      <div className="flex min-w-0 flex-col overflow-hidden">
        <div className="flex min-h-0 flex-1">
          <BrowserSidebar />
          <div className="flex min-w-0 flex-1 flex-col bg-[#1f0c1d] font-[Open_Sans,sans-serif]">
            <TabStrip />
            <AddressBar />
            <Bookmarks />
            <TestPage />
          </div>
        </div>
        <Taskbar tray />
      </div>
      <div className="relative flex min-w-0 flex-col justify-end">
        <PaintWindow />
        <Taskbar />
      </div>
    </div>
  );
}
